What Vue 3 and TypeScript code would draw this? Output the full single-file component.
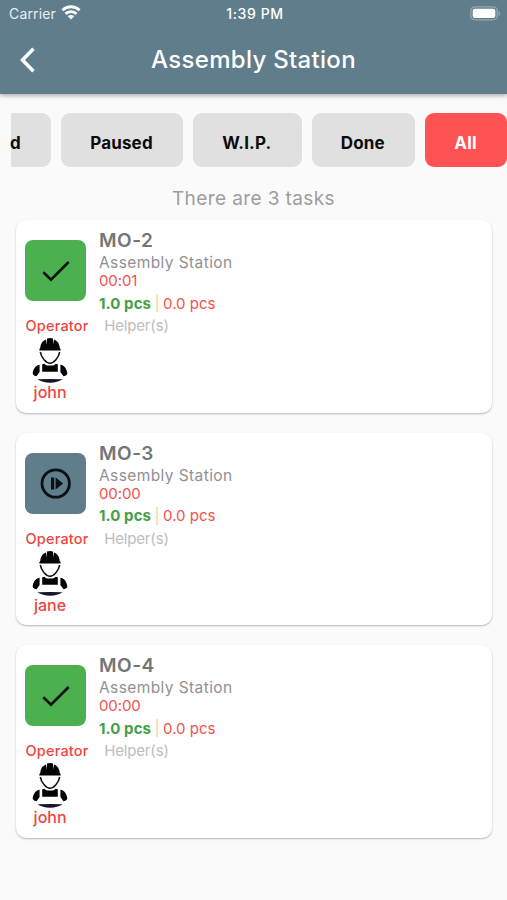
<script setup lang="ts">
interface Task {
  id: string
  station: string
  time: string
  state: 'done' | 'paused'
  good: string
  bad: string
  operator: string
}

const filters: { label: string; width: number }[] = [
  { label: 'Paused', width: 122 },
  { label: 'W.I.P.', width: 108.5 },
  { label: 'Done', width: 103.5 },
  { label: 'All', width: 82 },
]
const active = 'All'

const tasks: Task[] = [
  { id: 'MO-2', station: 'Assembly Station', time: '00:01', state: 'done', good: '1.0 pcs', bad: '0.0 pcs', operator: 'john' },
  { id: 'MO-3', station: 'Assembly Station', time: '00:00', state: 'paused', good: '1.0 pcs', bad: '0.0 pcs', operator: 'jane' },
  { id: 'MO-4', station: 'Assembly Station', time: '00:00', state: 'done', good: '1.0 pcs', bad: '0.0 pcs', operator: 'john' },
]
</script>

<template>
  <div class="screen">
    <header class="top">
      <div class="status">
        <div class="carrier">
          <span>Carrier</span>
          <svg width="20" height="15" viewBox="0 0 20 15" fill="none" stroke="#fff" stroke-width="2.9">
            <path d="M1.400 5.300C6.200.6 13.800.6 18.600 5.300" />
            <path d="M4.500 8.900C7.600 5.900 12.400 5.900 15.500 8.900" />
            <path d="M10 14.500L6.700 11.200C8.500 9.700 11.500 9.700 13.300 11.200Z" fill="#fff" stroke="none" />
          </svg>
        </div>
        <div class="clock">1:39 PM</div>
        <div class="power">
          <svg width="31" height="15" viewBox="0 0 31 15">
            <rect x=".8" y=".8" width="26.400" height="13" rx="4" fill="none" stroke="#94a8b3" stroke-width="1.300" />
            <rect x="2.700" y="2.700" width="22.600" height="9.200" rx="2" fill="#fff" />
            <path d="M28.500 5v5c2.200-.8 2.200-4.200 0-5z" fill="#94a8b3" />
          </svg>
        </div>
      </div>
      <div class="nav">
        <svg class="back" width="18" height="26" viewBox="0 0 18 26" fill="none" stroke="#fff" stroke-width="3.500">
          <path d="M15.500 1.800L4.500 13l11 11.200" />
        </svg>
        <h1>Assembly Station</h1>
      </div>
    </header>

    <nav class="filters">
      <button class="chip cut">d</button>
      <button
        v-for="f in filters"
        :key="f.label"
        class="chip"
        :class="{ active: f.label === active }"
        :style="{ width: f.width + 'px' }"
      >{{ f.label }}</button>
    </nav>

    <p class="count">There are {{ tasks.length }} tasks</p>

    <main class="list">
      <article v-for="t in tasks" :key="t.id" class="card">
        <div class="summary">
          <div class="badge" :class="t.state">
            <svg v-if="t.state === 'done'" width="61" height="61" viewBox="0 0 61 61" fill="none" stroke="#0b150c" stroke-width="2.700">
              <path d="M18.300 32.200L26 39.700 43.700 22" />
            </svg>
            <svg v-else width="61" height="61" viewBox="0 0 61 61">
              <circle cx="30.700" cy="30.500" r="13.700" fill="none" stroke="#0a1014" stroke-width="2.800" />
              <path d="M26 24.500h3.200v12H26zM30.600 24.500l7.500 6-7.500 6z" fill="#0a1014" />
            </svg>
          </div>
          <div class="info">
            <h2>{{ t.id }}</h2>
            <div class="station">{{ t.station }}</div>
            <div class="time">{{ t.time }}</div>
            <div class="pieces">
              <span class="good">{{ t.good }}</span>
              <i class="bar"></i>
              <span class="bad">{{ t.bad }}</span>
            </div>
          </div>
        </div>
        <div class="crew">
          <div class="person">
            <div class="role">Operator</div>
            <svg class="worker" width="36" height="46" viewBox="0 0 36 46">
              <path
                d="M7.300 12.700C7.300 12 8 11.400 8.300 10.800C8.500 6.800 10.700 3.700 14 2.600L15 7.500V1.500Q18 .3 21 1.500V7.500L22 2.600C25.300 3.700 27.500 6.800 27.700 10.800C28 11.400 28.700 12 28.700 12.700V13.600H7.300Z"
                fill="#050505"
              />
              <path d="M8.300 15C9.300 20.500 14.200 26.200 18 26.200S26.700 20.500 27.700 15" fill="none" stroke="#111" stroke-width="1.500" />
              <path d="M10.200 27.200L12.300 26.700Q13.300 28.600 18 28.600T23.700 26.700L25.800 27.200V34.700H10.200Z" fill="#050505" />
              <path d="M7.600 27.800V35L4.500 39.300C1.700 38.600.5 37.500.7 36C1.500 32 3.500 28.400 7.600 27.800ZM28.400 27.800V35L31.500 39.300C34.300 38.600 35.500 37.500 35.300 36C34.500 32 32.500 28.400 28.400 27.800Z" fill="#050505" />
              <path d="M5.500 42.300Q18 41.500 30.500 42.300Q25.500 45.700 18 45.700T5.500 42.300Z" fill="#15152b" />
            </svg>
            <div class="name">{{ t.operator }}</div>
          </div>
          <div class="helpers">Helper(s)</div>
        </div>
      </article>
    </main>
  </div>
</template>

<style>
body {
  margin: 0;
  background: #fafafa;
}
</style>

<style scoped>
.screen {
  width: 507px;
  height: 900px;
  overflow: hidden;
  background: #fafafa;
  font-family: Inter, "Liberation Sans", sans-serif;
}
.top {
  height: 94px;
  background: #607d8b;
  color: #fff;
  box-shadow: 0 1px 5px rgba(0, 0, 0, 0.4);
}
.status {
  height: 27px;
  display: grid;
  grid-template-columns: 1fr auto 1fr;
  align-items: center;
  padding: 0 6px 0 9px;
  font-size: 14px;
}
.carrier {
  display: flex;
  align-items: center;
  gap: 5px;
  color: #e9eef0;
  letter-spacing: 0.15px;
}
.carrier svg {
  margin-top: -2px;
}
.clock {
  font-weight: 500;
  letter-spacing: 0.6px;
}
.power {
  display: flex;
  justify-content: flex-end;
  margin-top: -1px;
}
.nav {
  height: 64px;
  display: grid;
  grid-template-columns: 60px 1fr 60px;
  align-items: center;
}
.back {
  margin: 1px 0 0 18px;
}
h1 {
  margin: 0;
  text-align: center;
  font-size: 24px;
  font-weight: 500;
  letter-spacing: 0.3px;
}
.filters {
  display: flex;
  gap: 10px;
  margin: 19px 0 0 11px;
}
.chip {
  flex: none;
  box-sizing: border-box;
  height: 54px;
  padding: 5px 1px 0 0;
  border: 0;
  border-radius: 9px;
  background: #e0e0e0;
  color: #0c0c0c;
  font: 700 17px Inter, "Liberation Sans", sans-serif;
  letter-spacing: 0.15px;
}
.cut {
  width: 40px;
  border-radius: 0 9px 9px 0;
  text-align: left;
  text-indent: -1px;
}
.active {
  background: #ff5252;
  color: #fff;
}
.count {
  margin: 20px 0 0;
  height: 23px;
  line-height: 23px;
  text-align: center;
  font-size: 19px;
  letter-spacing: 0.4px;
  color: #9e9e9e;
}
.list {
  display: flex;
  flex-direction: column;
  gap: 20px;
  padding: 10px 15px 0 15.5px;
}
.card {
  box-sizing: border-box;
  height: 192.5px;
  padding: 9px 10px 0;
  border-radius: 10px;
  background: #fff;
  box-shadow: 0 1px 2px rgba(0, 0, 0, 0.28);
}
.summary {
  display: flex;
  gap: 12.7px;
  margin-left: -0.2px;
}
.badge {
  width: 61px;
  height: 61px;
  margin-top: 11px;
  border-radius: 8px;
}
.badge svg {
  display: block;
}
.done {
  background: #4caf50;
}
.paused {
  background: #607d8b;
}
h2 {
  margin: 0;
  height: 24px;
  line-height: 24px;
  font-size: 19px;
  font-weight: 600;
  letter-spacing: 0.5px;
  color: #757575;
}
.station {
  height: 18px;
  line-height: 19px;
  font-size: 15.5px;
  letter-spacing: 0.4px;
  color: #919191;
}
.time {
  height: 19px;
  line-height: 19px;
  font-size: 15px;
  letter-spacing: -0.1px;
  color: #ef5350;
}
.pieces {
  display: flex;
  align-items: center;
  height: 26px;
  font-size: 15px;
  color: #ef5350;
}
.good {
  font-weight: 700;
  letter-spacing: 0.1px;
  color: #43a047;
}
.bar {
  width: 2px;
  height: 18px;
  margin: 0 5px;
  background: #ffe0b2;
}
.crew {
  display: flex;
  gap: 15.5px;
  font-size: 15px;
  line-height: 20px;
}
.person {
  display: flex;
  flex-direction: column;
  align-items: center;
  color: #ef4540;
}
.role {
  font-weight: 500;
  font-size: 14.5px;
  letter-spacing: 0.2px;
}
.worker {
  display: block;
  margin: 1px 14px 0 0;
}
.name {
  margin: 0 14px 0 0;
  font-size: 16px;
  font-weight: 500;
  line-height: 18px;
}
.helpers {
  letter-spacing: -0.15px;
  color: #bdbdbd;
}
</style>
